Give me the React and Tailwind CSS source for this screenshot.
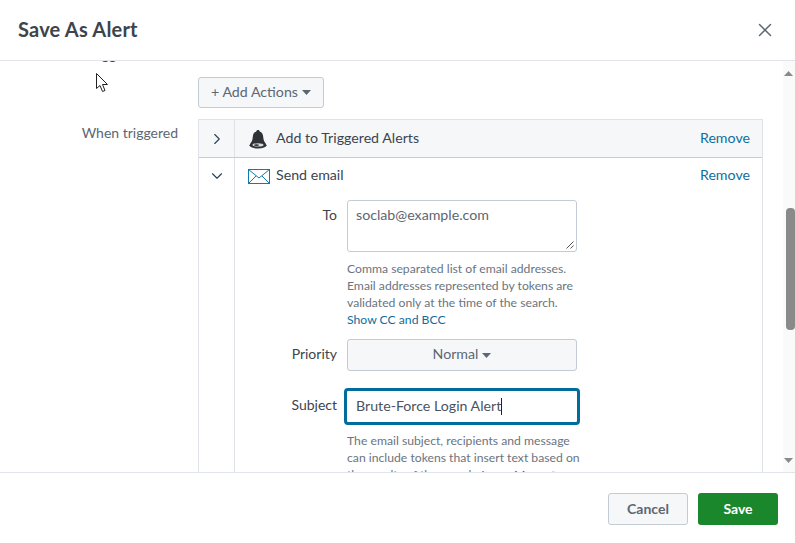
import React from "react";
import { ChevronDown, ChevronRight, ExternalLink, X } from "lucide-react";

const Caret = ({ className = "" }) => (
  <svg width="9" height="5" viewBox="0 0 9 5" className={className}>
    <path d="M0 0h9L4.5 5z" fill="currentColor" />
  </svg>
);

const BellIcon = () => (
  <svg width="20" height="20" viewBox="0 0 20 20">
    <path d="M10 1c1 0 1.6.6 1.7 1.4 2.3.8 3.3 2.8 3.5 5.3.2 2.6.6 4.6 2.3 6.6l.5 2.2H2l.5-2.2c1.700-2 2.100-4 2.300-6.600.2-2.500 1.200-4.500 3.500-5.300C8.400 1.600 9 1 10 1z" fill="#2f3337" />
    <ellipse cx="10" cy="16.300" rx="8.500" ry="3.200" fill="#2f3337" />
    <ellipse cx="10" cy="15.900" rx="5.500" ry="1.600" fill="#d8dade" />
    <ellipse cx="8.500" cy="16.100" rx="2.500" ry="0.900" fill="#2f3337" />
  </svg>
);

const MailIcon = () => (
  <svg width="22" height="15" viewBox="0 0 22 15" fill="none" stroke="#0f7cb0" strokeWidth="1">
    <rect x="0.500" y="0.500" width="21" height="14" />
    <path d="M0.500 0.500 11 9 21.500 0.500M0.500 14.500 8 7M21.500 14.500 14 7" />
  </svg>
);

const Field = ({ label, labelClass = "", children }) => (
  <div className="flex">
    <div className={`w-[102px] text-right text-[14px] leading-[20px] text-[#3c444d] ${labelClass}`}>{label}</div>
    <div className="ml-[10px] w-[230px]">{children}</div>
  </div>
);

const Help = ({ children, className = "mt-[8px]" }) => (
  <p className={`mr-[-4px] text-[12.2px] leading-[17px] text-[#6b7480] ${className}`}>{children}</p>
);

export default function App() {
  return (
    <div className="flex h-[543px] w-[795px] flex-col overflow-hidden bg-white font-['Lato','Liberation_Sans',sans-serif] text-[#3c444d]">
      <header className="flex h-[61px] shrink-0 items-center justify-between border-b border-[#e1e4e9] pl-[18px] pr-[19px]">
        <h1 className="pb-[3px] text-[20px] font-bold leading-none tracking-[0.2px] text-[#3c444d]">Save As Alert</h1>
        <X size={22} strokeWidth={1.6} className="text-[#5c6773]" />
      </header>

      <div className="flex min-h-0 flex-1">
        <main className="min-w-0 flex-1 overflow-hidden">
          <div className="mt-[-16px] flex h-[16px] justify-end pr-[605px] text-[14px] leading-[20px]">
            <span>Trigger Actions</span>
          </div>
          <div className="ml-[198px] mt-[16px] w-[565px]">
            <button className="flex h-[31px] w-[126px] items-center justify-center gap-[4px] rounded-[3px] border border-[#c3cbd4] bg-[#f5f7f9] pb-[2px] text-[14.2px] text-[#5c6773]">
              + Add Actions <Caret className="mt-[2px]" />
            </button>
          </div>

          <div className="mt-[11px] flex">
            <div className="w-[178px] pt-[4px] text-right text-[14px] leading-[20px] text-[#5c6773]">When triggered</div>
            <div className="ml-[20px] w-[565px] border border-b-0 border-[#dfe3e8]">
              <div className="flex h-[38px] border-b border-[#c3cbd4] bg-[#f5f7f9]">
                <div className="flex w-[36px] shrink-0 items-center justify-center border-r border-[#dfe3e8]">
                  <ChevronRight size={18} strokeWidth={1.5} className="text-[#2a3f5c]" />
                </div>
                <div className="flex flex-1 items-center pl-[13px] pr-[12px]">
                  <BellIcon />
                  <span className="ml-[8px] flex-1 pb-[2px] text-[14.2px]">Add to Triggered Alerts</span>
                  <a className="pb-[2px] text-[14.2px] text-[#0f6e9e]">Remove</a>
                </div>
              </div>
              <div className="flex">
                <div className="flex h-[36px] w-[35px] shrink-0 items-center justify-center">
                  <ChevronDown size={18} strokeWidth={1.5} className="text-[#2a3f5c]" />
                </div>
                <div className="flex-1 border-l border-[#dfe3e8] pb-[40px]">
                  <div className="flex h-[36px] items-center pl-[13px] pr-[12px]">
                    <MailIcon />
                    <span className="ml-[6px] flex-1 pb-[2px] text-[14.2px]">Send email</span>
                    <a className="pb-[2px] text-[14.2px] text-[#0f6e9e]">Remove</a>
                  </div>
                  <div className="mt-[6px]">
                    <Field label="To" labelClass="pt-[5px]">
                      <div className="relative h-[52px] rounded-[3px] border border-[#c3cbd4] px-[8px] py-[4px] text-[14.2px] leading-[20px] text-[#5c6773]">
                        soclab@example.com
                        <svg width="8" height="8" viewBox="0 0 8 8" className="absolute bottom-[2px] right-[2px]" stroke="#555">
                          <path d="M0.500 7.500 7.500 0.500M4.500 7.500 7.500 4.500" />
                        </svg>
                      </div>
                      <Help>
                        Comma separated list of email addresses. Email addresses represented by tokens are validated only at the time of the search.
                        <br />
                        <a className="text-[#0f6e9e]">Show CC and BCC</a>
                      </Help>
                    </Field>
                  </div>
                  <div className="mt-[11px]">
                    <Field label="Priority" labelClass="pt-[5px]">
                      <button className="flex h-[32px] w-full items-center justify-center gap-[4px] rounded-[3px] border border-[#c3cbd4] bg-[#f5f7f9] pb-[2px] text-[14.2px] text-[#5c6773]">
                        Normal <Caret className="mt-[2px]" />
                      </button>
                    </Field>
                  </div>
                  <div className="mt-[17px]">
                    <Field label="Subject" labelClass="pt-[7px]">
                      <div className="mx-[-3px] flex h-[37px] items-center rounded-[4px] border-[3px] border-[#006d9c] pb-[1px] pl-[9px] text-[14.2px] text-[#4a535e]">
                        Brute-Force Login Alert
                        <span className="h-[17px] w-px bg-[#222]" />
                      </div>
                      <Help className="mt-[7px]">
                        The email subject, recipients and message can include tokens that insert text based on the results of the search.{" "}
                        <a className="text-[#0f6e9e]">
                          Learn More <ExternalLink size={10} className="inline" />
                        </a>
                      </Help>
                    </Field>
                  </div>
                </div>
              </div>
            </div>
          </div>
        </main>

        <aside className="flex w-[12px] shrink-0 flex-col bg-[#fafafa]">
          <div className="flex h-[24px] items-center justify-center pr-[1px]">
            <Caret className="rotate-180 text-[#8a8a8a]" />
          </div>
          <div className="ml-[3px] mt-[123px] h-[122px] w-[9px] rounded-[4px] bg-[#8a8a8a]" />
          <div className="mt-auto flex h-[24px] items-center justify-center pr-[1px]">
            <Caret className="text-[#8a8a8a]" />
          </div>
        </aside>
      </div>

      <footer className="flex h-[71px] shrink-0 items-center justify-end gap-[10px] border-t border-[#e1e4e9] pr-[17px] pt-[2px]">
        <button className="h-[32px] w-[80px] rounded-[3px] border border-[#c3cbd4] bg-[#f5f7f9] pb-[2px] text-[14px] font-bold text-[#5c6773]">Cancel</button>
        <button className="h-[32px] w-[80px] rounded-[3px] bg-[#1a872c] pb-[2px] text-[14px] font-bold text-white">Save</button>
      </footer>

      {/* mouse pointer left in the capture */}
      <svg width="14" height="20" viewBox="0 0 14 20" className="absolute left-[96px] top-[73px]">
        <path d="M0.500 0.500V15.500L4 12.500L6.500 18.500L9 17.500L6.500 11.500H11.500Z" fill="#fff" stroke="#222" />
      </svg>
    </div>
  );
}
